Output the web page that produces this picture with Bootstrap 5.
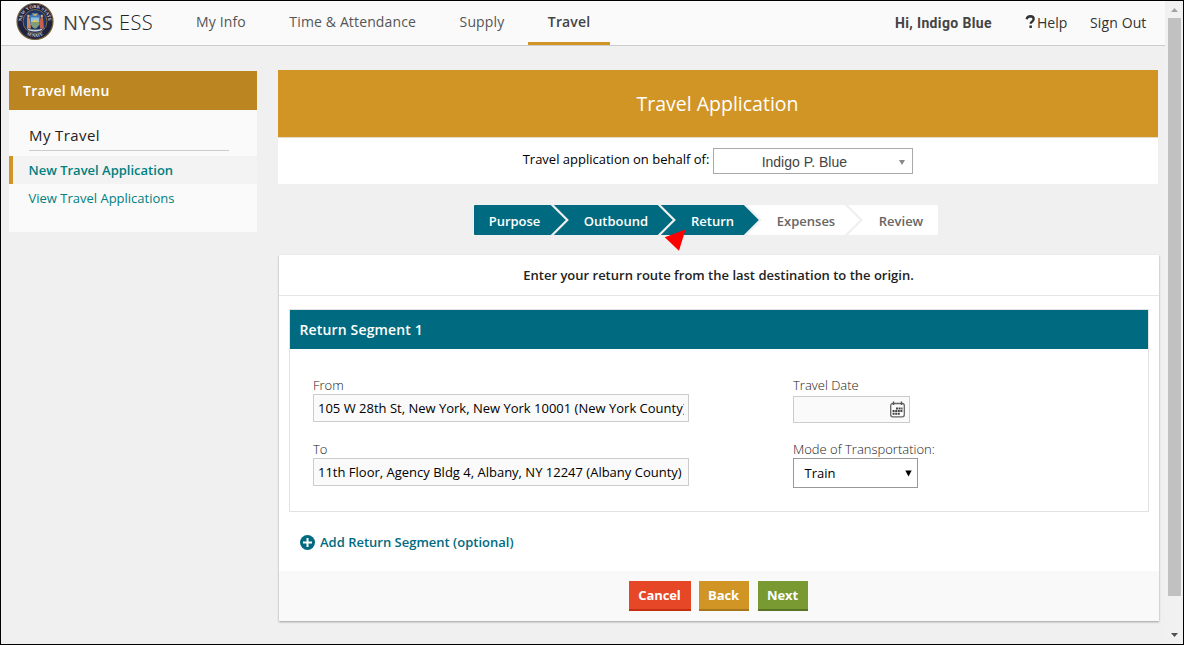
<!DOCTYPE html>
<html lang="en">
<head>
<meta charset="utf-8">
<title>NYSS ESS - Travel Application</title>
<meta name="viewport" content="width=device-width, initial-scale=1">
<link href="https://cdn.jsdelivr.net/npm/bootstrap@5.3.0/dist/css/bootstrap.min.css" rel="stylesheet">
<style>
  body { font-family: "Open Sans", sans-serif; font-size: 13px; line-height: 18px; color: #222; background: #f0f0f0; }
  .window { width: 1184px; height: 645px; border: 1px solid #000; }
  .topbar { height: 45px; background: #fafafa; border-bottom: 1px solid #ccc; padding: 0 0 0 14.500px; }
  .seal { margin-top: 1px; }
  .brand { font-size: 20px; line-height: 43px; margin-left: 9.500px; width: 113px; white-space: nowrap; font-weight: 300; letter-spacing: .5px; color: #222; }
  .brand span { font-weight: 400; color: #444; }
  .topnav { gap: 3.500px; }
  .topnav .nav-link { height: 44px; padding: 0 20px; font-size: 14px; line-height: 42px; letter-spacing: .14px; color: #555; white-space: nowrap; text-align: center; }
  .topnav .nav-link.active { font-weight: 600; color: #444; border-bottom: 3px solid #d19525; }
  .user { font: 700 14px/44px Roboto, sans-serif; letter-spacing: .36px; color: #444; width: 130px; }
  .tool { font-size: 14px; line-height: 43px; color: #333; white-space: nowrap; }
  .tool-help { width: 65px; }
  .tool-out { width: 75px; letter-spacing: .12px; }
  .side { width: 248px; height: 161px; margin: 25px 0 0 8px; background: #fafafa; }
  .side-title { height: 39px; line-height: 39px; padding-left: 14px; font-size: 14px; font-weight: 600; letter-spacing: .25px; color: #fff; background: #bb8621; }
  .side-group { margin: 12px 28px 5px 20px; height: 29px; line-height: 27px; border-bottom: 1px solid #ccc; font-size: 15px; letter-spacing: .4px; color: #222; }
  .side-link { display: block; height: 28px; line-height: 28px; padding-left: 15.500px; border-left: 4px solid transparent; color: #008080; text-decoration: none; }
  .side-link.active { background: #f3f3f3; border-left-color: #d19525; font-weight: 600; }
  .main { width: 882px; margin: 24px 0 0 21px; }
  .hero { width: 880px; height: 68px; line-height: 68px; background: #d19525; border-bottom: 1px solid #e4dccb; color: #fff; font-size: 19.500px; padding-right: 1px; }
  .behalf { width: 880px; height: 46px; background: #fff; color: #000; padding-top: 10px; }
  .behalf .lbl { line-height: 23px; }
  .picker { width: 200px; height: 26px; border: 1px solid #aaa; font: 14px/27px "Liberation Sans", sans-serif; color: #444; position: relative; }
  .picker span { padding-right: 18px; }
  .picker svg { position: absolute; right: 6px; top: 11px; }
  .steps { width: 464px; height: 30px; margin: 21px 0 20px 196px; position: relative; }
  .steps .step-shapes { position: absolute; left: 0; top: 0; }
  .steps .step-name { position: relative; line-height: 32px; font-weight: 600; color: #fff; white-space: nowrap; text-align: center; }
  .steps .step-name.todo { color: #666; }
  .pointer { position: absolute; left: 190px; top: 24px; }
  .panel { width: 880px; height: 366px; margin-left: 1px; background: #fff; box-shadow: 0 1px 2px rgba(0,0,0,.35); }
  .panel-note { height: 41px; line-height: 41px; font-weight: 600; border-bottom: 1px solid #e5e5e5; padding-right: 1px; }
  .segment { margin: 13px 10px 0; height: 203px; border: 1px solid #e2e2e2; }
  .segment-title { height: 39px; line-height: 39px; padding-left: 9.500px; background: #006b80; color: #fff; font-size: 14px; font-weight: 600; letter-spacing: .15px; }
  .field-label { font-weight: 300; height: 18px; white-space: nowrap; color: #222; }
  .boxed { width: 376px; height: 28px; line-height: 26px; border: 1px solid #ccc; background: #fafafa; padding: 0 4px; color: #000; white-space: nowrap; overflow: hidden; }
  .left-fields { width: 480px; padding: 27px 0 0 23px; }
  .right-fields { padding-top: 27px; padding-left: 23px; }
  .field-to { margin-top: 18px; }
  .field-mode { margin-top: 17px; }
  .datebox { width: 117px; height: 27px; border: 1px solid #ccc; background: #fafafa; margin-top: 2px; padding: 3.500px 3px 0 0; }
  .modebox { width: 125px; height: 30px; line-height: 28px; border: 1px solid #999; background: #fff; padding: 0 5.500px 0 10.500px; color: #000; }
  .add-link { margin: 20px 0 0 21px; height: 20px; line-height: 19px; gap: 5px; color: #006b80; font-weight: 600; }
  .panel-foot { height: 50px; background: #f9f9f9; margin-top: 19px; padding: 10px 2px 0 0; gap: 8px; }
  .act { height: 30px; border: 0; border-bottom: 2px solid; border-radius: 0; padding: 0; font-size: 13px; line-height: 28px; font-weight: 700; letter-spacing: -.12px; color: #fff; }
  .act-cancel { width: 62px; background: #e64727; border-color: #c42f12; }
  .act-back { width: 50px; background: #d19525; border-color: #a6761d; }
  .act-next { width: 50px; background: #799933; border-color: #587324; margin-left: 1px; }
  .scroller { width: 18px; background: #f1f1f1; }
  .thumb { width: 13px; height: 578px; margin-left: 3px; background: #c1c1c1; }
</style>
</head>
<body>
<div class="window d-flex overflow-hidden">
  <div class="flex-grow-1">
    <header class="topbar d-flex">
      <svg width="38" height="39" viewBox="0 0 38 39" class="seal flex-shrink-0">
        <defs>
          <path id="arcTop" d="M5.600 19a13.400 13.400 0 0 1 26.800 0"/>
          <path id="arcBottom" d="M3.400 19a15.600 15.600 0 0 0 31.200 0"/>
        </defs>
        <circle cx="19" cy="19.500" r="18" fill="#20213c" stroke="#75633f" stroke-width="1.200"/>
        <g transform="translate(0 .5)" font-family="Liberation Serif, serif" font-weight="700" font-size="4.600" fill="#d4d4da" text-anchor="middle">
          <text><textPath href="#arcTop" startOffset="50%">NEW YORK STATE</textPath></text>
          <text><textPath href="#arcBottom" startOffset="50%">SENATE</textPath></text>
        </g>
        <g transform="translate(0 -.5)">
          <circle cx="19" cy="20" r="12" fill="#1f3766" stroke="#8a7148" stroke-width=".9"/>
          <path d="M14 14q5-5 10 0l1 10H13z" fill="#3f78b5"/>
          <path d="M15 16h8v6q-1 4-4 5-3-1-4-5z" fill="#8fc0dc"/>
          <path d="M15 20.500h8v1.500q-1 4-4 5-3-1-4-5z" fill="#829d75"/>
          <path d="M16 20.500q3-4 6 0z" fill="#f0c64c"/>
          <path d="M16 11.500l3 1 3-1-2 3h-2z" fill="#c7a46c"/>
          <path d="M11 16l2-1 1 3 1 9h-4z" fill="#c98a60"/>
          <path d="M25 15l2 1 1 11h-4v-8z" fill="#c8604c"/>
          <circle cx="12.400" cy="14.400" r="1.200" fill="#dfb190"/>
          <circle cx="25.800" cy="14.400" r="1.200" fill="#dfb190"/>
          <path d="M11 27q8 2.500 16 0l-2 2q-6 2-12 0z" fill="#d8d8d6"/>
        </g>
      </svg>
      <div class="brand"><span>NYSS</span> ESS</div>
      <nav class="nav topnav flex-nowrap">
        <a class="nav-link" href="#">My Info</a>
        <a class="nav-link" href="#">Time &amp; Attendance</a>
        <a class="nav-link" href="#">Supply</a>
        <a class="nav-link active" href="#">Travel</a>
      </nav>
      <div class="user ms-auto">Hi, Indigo Blue</div>
      <div class="tool tool-help d-flex"><svg width="12" height="14" viewBox="0 0 10 12" style="margin-top:14px"><path d="M1.300 3.600Q1.700 1.100 4.500 1.100 7.300 1.200 7.300 3.500 7.300 4.700 6 5.600 4.700 6.400 4.700 7.600" fill="none" stroke="#333" stroke-width="2"/><path d="M3.600 9h2.200v2.100H3.600z" fill="#333"/></svg><span>Help</span></div>
      <div class="tool tool-out">Sign Out</div>
    </header>
    <div class="d-flex align-items-start">
      <aside class="side flex-shrink-0">
        <div class="side-title">Travel Menu</div>
        <div class="side-group">My Travel</div>
        <a class="side-link active" href="#">New Travel Application</a>
        <a class="side-link" href="#">View Travel Applications</a>
      </aside>
      <main class="main flex-shrink-0">
        <div class="hero text-center">Travel Application</div>
        <div class="behalf d-flex justify-content-center">
          <span class="lbl">Travel application on behalf of:</span>
          <div class="picker text-center ms-1"><span>Indigo P. Blue</span>
            <svg width="8" height="6"><path d="M1 0h6L4 5z" fill="#888"/></svg>
          </div>
        </div>
        <div class="steps d-flex">
          <svg class="step-shapes" width="464" height="30">
            <rect width="464" height="30" rx="1" fill="#fff"/>
            <path d="M1 0h269l15 15-15 15H1q-1 0-1-1V1q0-1 1-1z" fill="#006b80"/>
            <path d="M77.300-1l16 16-16 16M184.300-1l16 16-16 16" fill="none" stroke="#f0f0f0" stroke-width="2.200"/>
            <path d="M371.300-1l16 16-16 16" fill="none" stroke="#f0f0f0" stroke-width="2.400"/>
            <path d="M270.500-1l16 16-16 16" fill="none" stroke="#f0f0f0" stroke-width="1.800"/>
          </svg>
          <div class="step-name" style="width:81px">Purpose</div>
          <div class="step-name" style="width:122px">Outbound</div>
          <div class="step-name" style="width:71px">Return</div>
          <div class="step-name todo" style="width:116px">Expenses</div>
          <div class="step-name todo" style="width:74px">Review</div>
          <svg class="pointer" width="24" height="24"><path d="M.700 8.300L21.600.500 15 21.700z" fill="#f00"/></svg>
        </div>
        <section class="panel">
          <div class="panel-note text-center">Enter your return route from the last destination to the origin.</div>
          <div class="segment">
            <div class="segment-title">Return Segment 1</div>
            <div class="d-flex">
              <div class="left-fields">
                <div class="field-label">From</div>
                <div class="boxed"><div class="overflow-hidden">105 W 28th St, New York, New York 10001 (New York County)</div></div>
                <div class="field-label field-to">To</div>
                <div class="boxed">11th Floor, Agency Bldg 4, Albany, NY 12247 (Albany County)</div>
              </div>
              <div class="right-fields">
                <div class="field-label">Travel Date</div>
                <div class="datebox d-flex justify-content-end">
                  <svg width="17" height="17" viewBox="0 0 17 17"><rect x="1.700" y="2.500" width="13.600" height="13.300" rx="2" fill="#fafafa" stroke="#666" stroke-width="1.300"/><path d="M4.500 .5v3.500M12.500 .5v3.500" stroke="#555" stroke-width="1.400"/><path d="M7 7.500h6.500M3.600 10h9.900M3.600 12.700h7.200" stroke="#444" stroke-width="2" stroke-dasharray="2 .6"/></svg>
                </div>
                <div class="field-label field-mode">Mode of Transportation:</div>
                <div class="modebox d-flex justify-content-between align-items-center"><span>Train</span><svg width="7" height="7"><path d="M.300 .500h6.400L3.500 6.500z" fill="#000"/></svg></div>
              </div>
            </div>
          </div>
          <div class="add-link d-flex align-items-center"><svg width="15" height="15"><circle cx="7.500" cy="7.500" r="7.500" fill="#006b80"/><path d="M7.500 3v9M3 7.500h9" stroke="#fff" stroke-width="2"/></svg><span>Add Return Segment (optional)</span></div>
          <div class="panel-foot d-flex justify-content-center">
            <button class="btn act act-cancel">Cancel</button>
            <button class="btn act act-back">Back</button>
            <button class="btn act act-next">Next</button>
          </div>
        </section>
      </main>
    </div>
  </div>
  <div class="scroller flex-shrink-0">
    <svg class="d-block" width="18" height="17"><path d="M6 11l3.500-4 3.500 4z" fill="#a3a3a3"/></svg>
    <div class="thumb"></div>
    <svg class="d-block" width="18" height="48"><path d="M6 37h7l-3.500 4z" fill="#505050"/></svg>
  </div>
</div>
<script src="https://cdn.jsdelivr.net/npm/bootstrap@5.3.0/dist/js/bootstrap.bundle.min.js"></script>
</body>
</html>
